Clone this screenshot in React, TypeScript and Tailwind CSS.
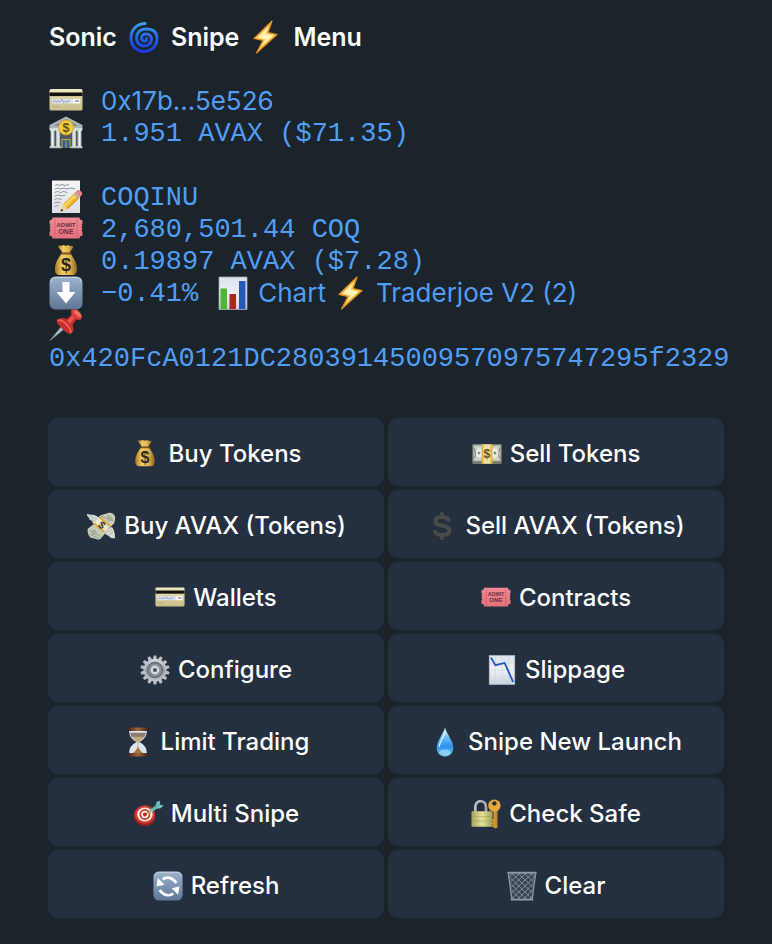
import type { ReactNode } from "react";

const sans = "font-['Inter','Liberation_Sans',sans-serif]";
const mono = "pt-0.5 font-['Liberation_Mono',monospace] text-[27px]";

function Gradient({ id, stops, flat = false }: { id: string; stops: string[]; flat?: boolean }) {
  return (
    <linearGradient id={id} x1="0" y1="0" x2={flat ? "1" : "0"} y2={flat ? "0" : "1"}>
      {stops.map((color, i) => (
        <stop key={i} offset={i / (stops.length - 1)} stopColor={color} />
      ))}
    </linearGradient>
  );
}

function Gradients() {
  return (
    <svg className="block h-0 w-0" aria-hidden="true">
      <defs>
        <linearGradient id="swirl" gradientUnits="userSpaceOnUse" x1="0" y1="2" x2="0" y2="33">
          <stop offset="0" stopColor="#3fa9f0" />
          <stop offset="0.5" stopColor="#2263e6" />
          <stop offset="1" stopColor="#1b35dc" />
        </linearGradient>
        <Gradient id="card" stops={["#f2eac0", "#d9cf9c", "#c9bf8c"]} />
        <Gradient id="gold" stops={["#a9782b", "#f0cf63", "#e0b84e", "#8f6420"]} flat />
        <Gradient id="tile" stops={["#9db4cc", "#7d95b3", "#5f7796"]} />
        <Gradient id="paper" stops={["#f5f6f6", "#dcdfe2"]} />
        <Gradient id="chart" stops={["#dbe3ec", "#eef1f5", "#c9d2dc"]} />
        <Gradient id="ticket" stops={["#f08a92", "#e2717c"]} />
        <Gradient id="drop" stops={["#d6f2ff", "#6cc0f3", "#2f8fe8", "#7fd4fb"]} />
        <Gradient id="steel" stops={["#d5dade", "#9aa1a8", "#b9bfc5"]} />
        <Gradient id="wood" stops={["#3e2417", "#a5683f", "#3e2417"]} flat />
        <Gradient id="lock" stops={["#a8a45a", "#e4e09a", "#a39f58"]} flat />
        <Gradient id="column" stops={["#9aa5a8", "#f1f4f4", "#a4aeb0"]} flat />
      </defs>
    </svg>
  );
}

const icons = {
  swirl: (
    <path
      d="M18 3.5C9 4 4 10 4 18s6 13.5 13 13.5S30 26 30 18.5 25 9 19 9 9.5 13 9.5 18 13 26 17 26s7.5-3 7.5-6.5S22 14 19 14s-4.5 2-4.5 4 1.5 3.200 3 3.200 2.500-1.200 2-2.700"
      fill="none"
      stroke="url(#swirl)"
      strokeWidth="3"
      strokeLinecap="round"
    />
  ),
  bolt: (
    <>
      <path d="M23 1 5 18.500l9 2L7.500 33 28 14.500l-9-2Z" fill="#f8c24a" stroke="#e58e1d" strokeWidth="1.2" strokeLinejoin="round" />
      <path d="M20 6 8.500 17.500l8 2L12 27l12.500-11.500-8-2Z" fill="#fff3b5" />
    </>
  ),
  card: (
    <>
      <rect x="0.5" y="5" width="33" height="21.5" rx="1.5" fill="url(#card)" />
      <rect x="0.5" y="8.5" width="33" height="3.6" fill="#111" />
      <rect x="3" y="15" width="21" height="4.5" fill="#dde2ee" />
      <rect x="24" y="15" width="7" height="4.5" fill="#fff" />
      <path d="M4 18.500c2-5 3 2 4-1s2 2 3 0 2-3 3 0 2-2 3 0 2-1 4-1" fill="none" stroke="#5c76bd" strokeWidth="0.7" />
      <path d="M26 17h4" stroke="#555" />
      <path d="M3 22.500h7" stroke="#b9ad74" />
    </>
  ),
  bank: (
    <>
      <path d="M3 12h28v20H3z" fill="#4c5b62" />
      <path d="M17 .5 33.500 9v3H.5V9Z" fill="#a9b5b8" />
      <path d="M17 3 29 10H5Z" fill="#78878d" />
      <path d="M.5 12h33v2H.5z" fill="#d6dddd" />
      {[1.5, 7, 23, 28.5].map((x) => (
        <g key={x}>
          <rect x={x} y="14" width="4" height="17" fill="url(#column)" />
          <path d={`M${x - 0.5} 14.500h5M${x - 0.5} 30.500h5`} stroke="#dce3e3" />
        </g>
      ))}
      <path d="M12.500 23h9v9h-9z" fill="#c9a63f" />
      <path d="M13.500 24h3v8h-3zM17.500 24h3v8h-3z" fill="#2c5f8b" />
      <path d="M.5 31.500h12M21.500 31.500h12" stroke="#b8c1c2" strokeWidth="1.5" />
      <circle cx="17" cy="11.5" r="7.5" fill="#f4cd3d" stroke="#c99b24" strokeWidth="0.8" />
      <text x="17" y="16" textAnchor="middle" fontSize="12.5" fontWeight="700" fill="#65501a">$</text>
    </>
  ),
  note: (
    <>
      <rect x="3" y="0.5" width="28" height="32.5" fill="url(#paper)" />
      <path
        d="M6 5.500l2-1 2 1 3-1 3 1 4-1M6 9l3-1 2 1 4-1 3 1 4-1 4 1M5.500 12.500l3-1 3 1 3-1 4 1M5.500 16l4-1 3 1 4-1M5.500 19.500l3-1 4 1M5.500 23l4-1 2 1M5.500 26.500l4-1"
        fill="none"
        stroke="#777b80"
        strokeWidth="0.8"
      />
      <path d="M11.500 31.500 14 24.500 26 12.500l5 4.500-12.500 12Z" fill="#f0b72b" />
      <path d="M15.500 26 28 14" stroke="#fbdc6b" strokeWidth="1.8" />
      <path d="M18 29 30 18" stroke="#c98a1c" strokeWidth="1" />
      <path d="m11.500 31.500 2.500-7 4.500 4.500Z" fill="#f0d5a3" />
      <path d="m11.500 31.500 1-2.800 1.800 1.700Z" fill="#222" />
      <path d="m24.500 14 5 4.500 1.500-1.500-5-4.500Z" fill="#abb3b8" />
      <path d="m26 12.500 5 4.500 2-2.500c1-2.500-3-6-5-4Z" fill="#e8828c" />
    </>
  ),
  ticket: (
    <>
      <path
        d="M3.500 5.500h27l.5 2 2.500 1v3l-1 1 1 1.500-1 1.500 1 1.500-1 1.500 1 1.500v3.500l-2.500 1-.5 2h-27l-.5-2-2.500-1v-3.500l1-1.500-1-1.500 1-1.500-1-1.500 1-1.500-1-1v-3l2.500-1Z"
        fill="url(#ticket)"
      />
      <path d="M6 7.500v18M28 7.500v18" stroke="#c95562" strokeWidth="1" strokeDasharray="1.5 1" />
      <g fill="#683139" fontSize="6" fontWeight="700" textAnchor="middle">
        <text x="17" y="15">ADMIT</text>
        <text x="17" y="22" fontSize="7">ONE</text>
      </g>
    </>
  ),
  bag: (
    <>
      <path d="M9 1.500c2 0 3 1 5-.5 2 1 4 1 5.500 0 1.500 1.500 3.500 1 5 1-.5 3-3 4.500-4 7h-7c-1-3-4-4-4.500-7.500Z" fill="url(#gold)" />
      <path d="M13.500 8.500h7C24 13 28 18 28 25c0 4-1.500 6-5 6H11c-3.500 0-5-2-5-6 0-7 4-12 7.500-16.500Z" fill="url(#gold)" />
      <path d="M12.500 9.500h9" stroke="#77511b" strokeWidth="2" strokeLinecap="round" />
      <text x="17" y="27" textAnchor="middle" fontSize="18" fontWeight="700" fill="#2d281c">$</text>
    </>
  ),
  down: (
    <>
      <rect x="0.5" y="0.5" width="33" height="33" rx="6" fill="url(#tile)" />
      <path d="M2 6q0-4.500 5-4.500h20q5 0 5 4.500" fill="none" stroke="#c4d4e2" strokeWidth="1" />
      <path d="M13.500 6h7v10h6L17 27.500 7.500 16h6Z" fill="#fff" />
    </>
  ),
  bars: (
    <>
      <rect x="3" y="1" width="28" height="32.5" fill="url(#chart)" />
      <path d="M4.500 12.500H11v21H4.500z" fill="#4fb536" />
      <path d="M13.500 18h6.500v15.500h-6.500z" fill="#a92720" />
      <path d="M23 5h6.500v28.500H23z" fill="#2458bd" />
      <path d="M3 1h28v32.500H3z" fill="none" stroke="#9ca6af" strokeWidth="0.8" />
    </>
  ),
  pin: (
    <>
      <path d="M1 32.500 12 19l2.500 2.500Z" fill="#aebbc4" stroke="#8493a0" strokeWidth="0.7" />
      <path d="M7.500 13c3-4 7-3.500 10.500-2l5-5 5 5-4.500 5.500c1.500 4 1.500 7-1.500 9.500-3 1-13-8-14.500-13Z" fill="#c62f2b" />
      <path d="M8.500 12.500c4-2 12 5 13.500 12" fill="none" stroke="#ec6a60" strokeWidth="1.5" />
      <path d="m18 13 6-6 2 2-5 7Z" fill="#e7564d" />
      <ellipse cx="27.5" cy="6.5" rx="6.5" ry="4" transform="rotate(43 27.5 6.5)" fill="#dc3d37" />
      <ellipse cx="28.5" cy="5.5" rx="4.5" ry="2" transform="rotate(43 28.5 5.5)" fill="#ed7067" />
    </>
  ),
  wings: (
    <>
      <path d="M1 3c4 2 9 0 13 4l-2 9C8 15 7 13 7 11 4 11 3 9 4 8 2 7 1 5 1 3ZM33 31c0-5-1-11-4-13l-8 4c0 4 3 6 5 6 1 3 4 3 7 3Z" fill="#d6d9d0" />
      <path d="M4 5l8 5M5 9l7 4M23 24l6-3M26 27l5-4" stroke="#a7aca3" strokeWidth="0.8" />
      <path d="m16 5 10-3c4-1 8 3 7 7l-1 5-7 7L11 10Z" fill="#c7ccb9" />
      <path d="m2 20 8-6 13 10-7 8c-2 1-5 0-7-1-5 0-8-5-7-11Z" fill="#c7ccb9" />
      <path d="m17 6 14 5M24 4l6 6M4 22l13 7M3 26l12 5" stroke="#8d9685" strokeWidth="1" />
      <circle cx="26.5" cy="8.5" r="3" fill="#a7b09b" />
      <circle cx="9" cy="24" r="3" fill="#a7b09b" />
      <path d="m15 7 12 10-6 7L9 14Z" fill="#ede7c8" />
      <path d="m15 7 12 10M9 14l12 10" stroke="#dda52f" strokeWidth="2" />
      <text x="18" y="20" textAnchor="middle" fontSize="12" fontWeight="700" fill="#443d2a" transform="rotate(40 18 16)">$</text>
    </>
  ),
  cash: (
    <>
      <rect x="0.5" y="6" width="33" height="22" rx="1" fill="#95988a" />
      <rect x="2" y="7.5" width="30" height="17" fill="#cdd2c3" />
      <path d="M2 22c3-3 2-9 0-12M32 22c-3-3-2-9 0-12" fill="none" stroke="#78816f" strokeWidth="1.2" />
      <ellipse cx="8.5" cy="16" rx="4" ry="5.5" fill="#e8eae1" />
      <ellipse cx="26" cy="16" rx="4" ry="5.5" fill="#e8eae1" />
      <circle cx="8" cy="16" r="1.5" fill="#848d7c" />
      <circle cx="26" cy="16" r="1.5" fill="#4f9d68" />
      <path d="M1 26.500h32" stroke="#707368" strokeWidth="1.5" />
      <path d="M11.500 6h11v22h-11z" fill="#efe1a6" />
      <path d="M12 6v22M22 6v22" stroke="#e9b329" strokeWidth="2" />
      <text x="17" y="21" textAnchor="middle" fontSize="14" fontWeight="700" fill="#67501c">$</text>
    </>
  ),
  dollar: (
    <>
      <path d="M25 12C24.500 8.500 22 6.800 17 6.800s-7.500 1.900-7.500 4.800c0 7.500 16 2.900 16 10.400 0 3.500-3.500 5.200-8.500 5.200s-8-2.200-8.500-5.700" fill="none" stroke="#4a4a4a" strokeWidth="4.5" />
      <path d="M17 1.500v5M17 27.500v5" stroke="#4a4a4a" strokeWidth="4" />
    </>
  ),
  gear: (
    <>
      {Array.from({ length: 14 }, (_, i) => (
        <path key={i} d="m14.500 6 1-5.500h3l1 5.500Z" fill="#b7bdc3" transform={`rotate(${(i * 360) / 14} 17 17)`} />
      ))}
      <circle cx="17" cy="17" r="12.5" fill="url(#steel)" stroke="#c5cace" />
      <circle cx="17" cy="17" r="8.5" fill="#8a9299" stroke="#62696f" strokeWidth="1.5" />
      <circle cx="17" cy="17" r="5" fill="#d4d9dd" />
      <circle cx="17" cy="17" r="2.3" fill="#4b5259" />
    </>
  ),
  slump: (
    <>
      <rect x="2.5" y="0.5" width="29" height="33" fill="url(#chart)" stroke="#aeb8c2" strokeWidth="0.7" />
      <path d="M9.500 1v32M17 1v32M24.500 1v32M3 9h28M3 17h28M3 25h28" stroke="#cbd4de" strokeWidth="0.6" />
      <path d="m4.500 3 5 8.500L20 9l9.500 21.500" fill="none" stroke="#1f55c0" strokeWidth="2" />
    </>
  ),
  hourglass: (
    <>
      <path d="M7 4h20c0 7-3 10-8.500 13 5.500 3 8.500 6 8.500 13H7c0-7 3-10 8.500-13C10 14 7 11 7 4Z" fill="#dce4f2" />
      <path d="M8 6.500h18q-.5 3-2 5H10q-1.500-2-2-5Z" fill="#8d7c6c" />
      <path d="M10 11h14c-1.500 3-4 4-6 6h-2c-2-2-4.500-3-6-6Z" fill="#c7a780" />
      <path d="M17 16v8" stroke="#c7a780" />
      <path d="M17 22c1.500 4 4 6 6.500 8h-13c2.500-2 5-4 6.500-8Z" fill="#a5783f" />
      <rect x="5.5" y="0.5" width="23" height="4" rx="1" fill="url(#wood)" />
      <rect x="5.5" y="29.5" width="23" height="4" rx="1" fill="url(#wood)" />
    </>
  ),
  drop: (
    <>
      <path d="M17 .5c2.500 8 9.500 16 9.500 22.500 0 6.500-4 10.500-9.500 10.500S7.500 29.500 7.500 23C7.500 16.500 14.500 8.500 17 .5Z" fill="url(#drop)" />
      <path d="M17 6c-2 6-6 11-6.500 16" fill="none" stroke="#d9f3ff" strokeWidth="1.5" strokeLinecap="round" />
      <ellipse cx="17" cy="28.5" rx="6" ry="3" fill="#a5e4fd" opacity="0.6" />
    </>
  ),
  target: (
    <>
      <ellipse cx="13" cy="19.5" rx="12.5" ry="11" transform="rotate(20 13 19.5)" fill="#9f211b" />
      <ellipse cx="13.5" cy="17.5" rx="11.5" ry="10.5" fill="#d33a30" />
      <ellipse cx="13.5" cy="17.5" rx="8.8" ry="8" fill="#f4eee8" />
      <circle cx="13.5" cy="17.5" r="6.2" fill="#d33a30" />
      <circle cx="13.5" cy="17.5" r="4.2" fill="#f4eee8" />
      <circle cx="13.5" cy="17.5" r="2.2" fill="#c52c25" />
      <path d="m14 17.500 5-4" stroke="#4b4b4b" strokeWidth="1" />
      <path d="m17 15 3-3 2.500 2-3.500 2.500Z" fill="#deb34b" />
      <path d="m19 12.500 6.500-5L27 3l3.500-1v4.500l4 .5-3 3.500-5 .5-5 4Z" fill="#76c4c5" />
      <path d="m22 12 8-6" stroke="#3c8e95" strokeWidth="1" />
    </>
  ),
  safe: (
    <>
      <path d="M5 16V9.500C5 4 8 2.500 11 2.500s6 1.500 6 7V16" fill="none" stroke="#a8aeb4" strokeWidth="3" />
      <path d="M4.500 13V9c0-4 3-7 6.500-7" fill="none" stroke="#dfe4e9" strokeWidth="1" />
      <rect x="0.5" y="14" width="24" height="17.5" rx="1" fill="url(#lock)" />
      <path d="M1 20h23M1 25h23" stroke="#989451" strokeWidth="0.5" />
      <path d="M25.500 12h4.500v20l-2 1.500-2.500-1.500-2-1 2-1.500-2-2 2-1.500-2-2 2-1.500Z" fill="#d69c2e" />
      <circle cx="26.5" cy="7.5" r="7" fill="#e3ab3d" />
      <circle cx="26.5" cy="5" r="2.5" fill="#24303f" />
      <path d="M28.500 14v17" stroke="#a36d1e" strokeWidth="0.8" />
    </>
  ),
  refresh: (
    <>
      <rect x="0.5" y="0.5" width="33" height="33" rx="6" fill="url(#tile)" />
      <path d="M2 6q0-4.500 5-4.500h20q5 0 5 4.500" fill="none" stroke="#c4d4e2" strokeWidth="1" />
      <path d="M11 9.500C15.500 6 22 7 26.500 13.500M23 25.500c-4.500 3.500-11 2.500-15.500-4" fill="none" stroke="#fff" strokeWidth="3" />
      <path d="m4 17.500 1.500-9.500L13 15.500ZM30 17.500l-1.500 9.500-7.500-7.500Z" fill="#fff" />
    </>
  ),
  trash: (
    <>
      <path d="M1.500 2.500h31L28.500 32h-23Z" fill="#3b4552" />
      <path
        d="M2 7l5-4M3 13 14 3M4 19 21 3M5 25 28 3M6 31 32 6M12 32 31 13M19 32 30 20M26 32l4-5M32 7l-5-4M31 13 20 3M30 19 13 3M29 25 6 3M28 31 2 6M22 32 3 13M15 32 4 20M8 32l-4-5"
        fill="none"
        stroke="#8894a1"
        strokeWidth="1"
      />
      <path d="M1.500 2.500 5.500 32M32.500 2.500 28.500 32" stroke="#8a95a1" strokeWidth="1.5" />
      <path d="M1.500 2h31" stroke="#8d98a4" strokeWidth="2.5" strokeLinecap="round" />
      <path d="M5 32.500h24" stroke="#8e99a4" strokeWidth="2" strokeLinecap="round" />
    </>
  ),
};

type IconName = keyof typeof icons;

function Icon({ name, small = false }: { name: IconName; small?: boolean }) {
  return (
    <svg
      viewBox="0 0 34 34"
      className={`shrink-0 overflow-visible font-['Liberation_Sans',sans-serif] ${small ? "size-[30px]" : "-my-1 size-[34px]"}`}
      aria-hidden="true"
    >
      {icons[name]}
    </svg>
  );
}

function Row({ icon, children }: { icon: IconName; children?: ReactNode }) {
  return (
    <div className="flex h-8 items-center gap-[18px]">
      <Icon name={icon} />
      {children}
    </div>
  );
}

const actions: { icon: IconName; label: string }[] = [
  { icon: "bag", label: "Buy Tokens" },
  { icon: "cash", label: "Sell Tokens" },
  { icon: "wings", label: "Buy AVAX (Tokens)" },
  { icon: "dollar", label: "Sell AVAX (Tokens)" },
  { icon: "card", label: "Wallets" },
  { icon: "ticket", label: "Contracts" },
  { icon: "gear", label: "Configure" },
  { icon: "slump", label: "Slippage" },
  { icon: "hourglass", label: "Limit Trading" },
  { icon: "drop", label: "Snipe New Launch" },
  { icon: "target", label: "Multi Snipe" },
  { icon: "safe", label: "Check Safe" },
  { icon: "refresh", label: "Refresh" },
  { icon: "trash", label: "Clear" },
];

export default function App() {
  return (
    <main className={`min-h-screen bg-[#1b232b] pt-[21px] pb-[26px] text-[#519ef4] ${sans}`}>
      <Gradients />
      <section className="pr-8 pl-[49px] text-[26px] leading-8">
        <h1 className="flex h-8 items-center gap-2.5 text-[25px] font-semibold text-white">
          Sonic
          <Icon name="swirl" />
          Snipe
          <Icon name="bolt" />
          Menu
        </h1>
        <div className="mt-8">
          <Row icon="card">
            <a href="#wallet">0x17b...5e526</a>
          </Row>
          <Row icon="bank">
            <span className={mono}>1.951 AVAX ($71.35)</span>
          </Row>
        </div>
        <div className="mt-8">
          <Row icon="note">
            <span className={mono}>COQINU</span>
          </Row>
          <Row icon="ticket">
            <span className={mono}>2,680,501.44 COQ</span>
          </Row>
          <Row icon="bag">
            <span className={mono}>0.19897 AVAX ($7.28)</span>
          </Row>
          <Row icon="down">
            <span className={mono}>−0.41%</span>
            <span className="flex items-center gap-2">
              <Icon name="bars" />
              <a href="#chart">Chart</a>
              <Icon name="bolt" />
              <a href="#traderjoe">Traderjoe V2 (2)</a>
            </span>
          </Row>
          <Row icon="pin" />
          <p className={`break-all ${mono}`}>0x420FcA0121DC28039145009570975747295f2329</p>
        </div>
      </section>
      <section className="mt-[43px] grid grid-cols-2 gap-1 px-12" aria-label="Actions">
        {actions.map(({ icon, label }) => (
          <button
            key={label}
            type="button"
            className="flex h-[68px] items-center justify-center gap-2 rounded-[10px] bg-[#24303f] pt-1 text-[24px] font-medium text-white"
          >
            <Icon name={icon} small />
            {label}
          </button>
        ))}
      </section>
    </main>
  );
}
